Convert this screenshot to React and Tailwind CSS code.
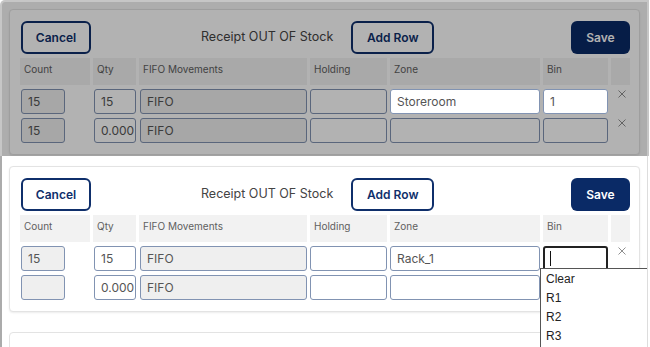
function XIcon() {
  return (
    <svg width="8" height="8" viewBox="0 0 8 8" className="block">
      <path d="M0.5 0.5 L7.5 7.5 M7.5 0.5 L0.5 7.5" stroke="#8f8f8f" strokeWidth="1" />
    </svg>
  );
}

function Field({ value, disabled, highlight, focused, className = "" }) {
  let look = "bg-white border border-[#8193b2]";
  if (disabled) look = "bg-[#efefef] border border-[#8193b2]";
  if (focused) look = "bg-white border-2 border-[#222222]";
  return (
    <div
      className={
        "h-[25px] rounded-[3px] flex items-center pl-[6px] text-[12px] text-[#555555] " +
        look +
        (highlight ? " relative z-20" : "") +
        " " +
        className
      }
    >
      {focused ? <span className="block w-px h-[15px] bg-[#111111] ml-[-1px]" /> : value}
    </div>
  );
}

const headers = ["Count", "Qty", "FIFO Movements", "Holding", "Zone", "Bin", ""];

function Card({ rows, dropdown }) {
  return (
    <div className="w-[631px] bg-white border border-[#e3e3e3] rounded-[4px] shadow-[0_1px_2px_rgba(0,0,0,0.08)] pt-[11px] pb-[11px] pl-[10px] pr-[9px]">
      <div className="flex items-center h-[33px]">
        <button className="ml-px w-[70px] h-[33px] rounded-[6px] border-2 border-[#0f2f6b] text-[#0f2f6b] text-[12px] font-semibold">
          Cancel
        </button>
        <div className="ml-[110px] text-[12.5px] text-[#444444]">Receipt OUT OF Stock</div>
        <button className="ml-[18px] w-[83px] h-[33px] rounded-[6px] border-2 border-[#0f2f6b] text-[#0f2f6b] text-[12px] font-semibold">
          Add Row
        </button>
        <button className="ml-auto w-[59px] h-[33px] rounded-[6px] bg-[#0a2a66] text-white text-[12px] font-semibold">
          Save
        </button>
      </div>
      <div className="mt-[4px] grid grid-cols-[70px_43px_168px_77px_150px_65px_19px] gap-x-[3px] gap-y-[4px]">
        {headers.map((h, i) => (
          <div key={i} className="h-[27px] bg-[#f2f2f2] pl-[4px] pt-[4px] text-[10px] text-[#606060]">
            {h}
          </div>
        ))}
        {rows.map((r, ri) => (
          <div key={ri} className={"contents"}>
            <Field value={r.count} disabled className="ml-px w-[44px]" />
            <Field value={r.qty} className="ml-px" />
            <Field value="FIFO" disabled className="ml-px" />
            <Field value="" />
            <Field value={r.zone} highlight={r.hl} />
            <div className="relative">
              <Field value={r.bin} highlight={r.hl} focused={r.focus} />
              {r.focus && dropdown && (
                <div className="absolute z-30 left-[-3px] top-[22px] w-[112px] h-[90px] bg-white border border-[#555555] font-['Liberation_Sans',sans-serif] text-[12px] text-[#222222]">
                  {["Clear", "R1", "R2", "R3"].map((o) => (
                    <div key={o} className="h-[19px] flex items-center pl-[5px]">
                      {o}
                    </div>
                  ))}
                </div>
              )}
            </div>
            <div className="flex justify-center pt-[1px] pl-[3px]">
              <XIcon />
            </div>
          </div>
        ))}
      </div>
    </div>
  );
}

export default function App() {
  const topRows = [
    { count: "15", qty: "15", zone: "Storeroom", bin: "1", hl: true },
    { count: "15", qty: "0.000", zone: "", bin: "" },
  ];
  const bottomRows = [
    { count: "15", qty: "15", zone: "Rack_1", bin: "", focus: true },
    { count: "", qty: "0.000", zone: "", bin: "" },
  ];
  return (
    <div className="w-[650px] h-[347px] overflow-hidden bg-white font-['Inter',sans-serif]">
      <div className="relative w-[649px] h-[156px] overflow-hidden bg-[#f8f8f8] border-l-2 border-t-2 border-r-2 border-[#c6c6c6] rounded-tl-[5px] pl-[7px] pt-[7px]">
        <Card rows={topRows} />
        <div className="absolute inset-0 z-10 bg-black/30" />
      </div>
      <div className="w-[648px] h-[191px] overflow-hidden border-l-2 border-r border-l-[#ababab] border-r-[#dddddd] pl-[7px] pt-[10px]">
        <div className="relative z-0">
          <Card rows={bottomRows} dropdown />
        </div>
        <div className="mt-[20px] w-[631px] h-[40px] border border-[#e3e3e3] rounded-[4px]" />
      </div>
    </div>
  );
}
